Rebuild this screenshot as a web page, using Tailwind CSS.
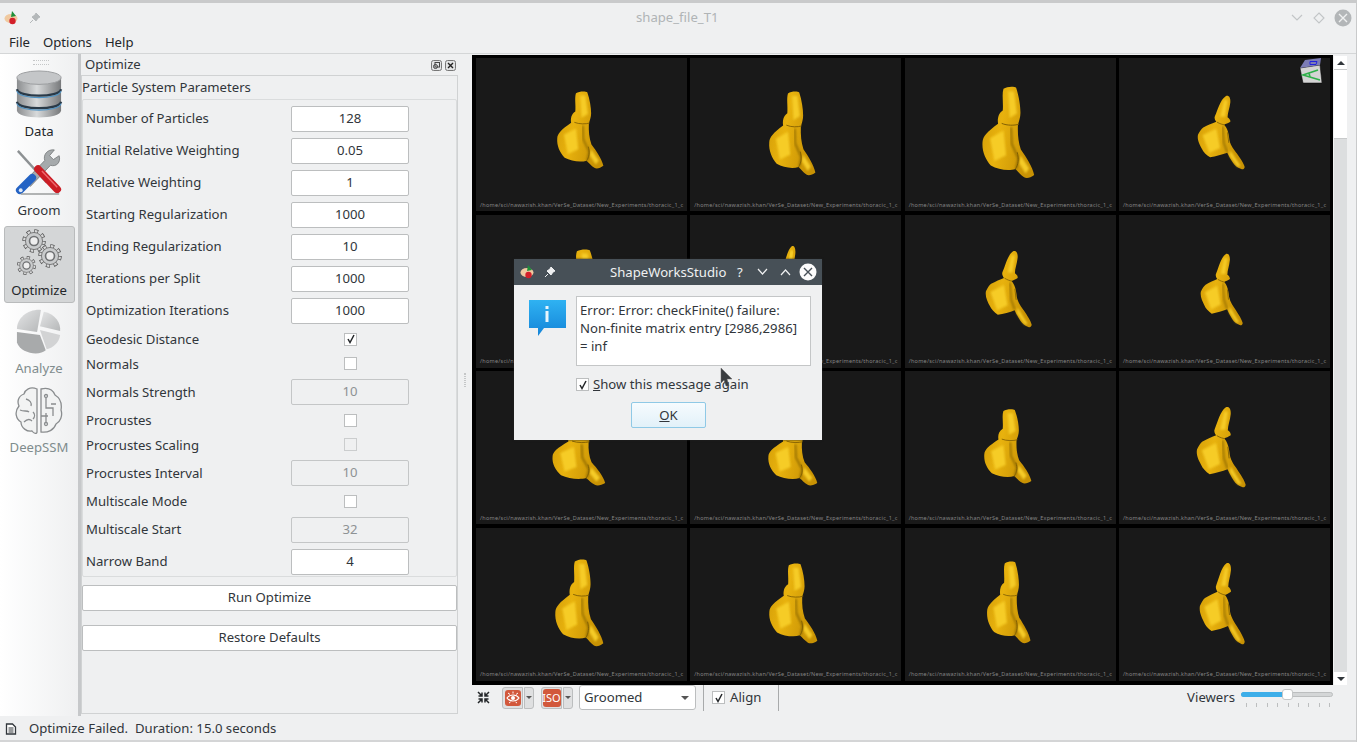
<!DOCTYPE html>
<html lang="en">
  <head>
    <meta charset="UTF-8" />
    <title>shape_file_T1</title>
    <script src="https://cdn.jsdelivr.net/npm/@tailwindcss/browser@4"></script>
  </head>
  <body class="bg-[#eff0f1] font-['Noto_Sans',sans-serif] text-[13.15px] leading-none text-[#232629] overflow-hidden">
    <!-- shared gradients and shapes -->
    <svg class="absolute w-0 h-0">
      <defs>
        <linearGradient id="gold" x1="0" y1="0" x2="1" y2="0.35">
          <stop offset="0" stop-color="#d09a06" />
          <stop offset="0.45" stop-color="#e8b20e" />
          <stop offset="1" stop-color="#c89204" />
        </linearGradient>
        <linearGradient id="metal" x1="0" y1="0" x2="1" y2="0">
          <stop offset="0" stop-color="#8b8d8f" />
          <stop offset="0.45" stop-color="#d8dadb" />
          <stop offset="1" stop-color="#77797b" />
        </linearGradient>
        <linearGradient id="pie" x1="0" y1="0" x2="1" y2="1">
          <stop offset="0" stop-color="#e4e5e6" />
          <stop offset="1" stop-color="#b5b7b8" />
        </linearGradient>
        <filter id="soft"><feGaussianBlur stdDeviation="3" /></filter>
        <symbol id="vertA" viewBox="100 85 155 250" preserveAspectRatio="none">
          <path fill="url(#gold)" d="M165 95 C175 88 195 88 200 92 C208 115 212 140 212 158 C212 170 208 180 205 190 C204 215 206 235 213 255 C228 275 245 300 250 322 C240 330 228 332 222 328 C212 322 205 312 198 306 C180 312 150 308 130 297 C115 280 105 260 107 235 C108 220 120 208 150 187 C148 175 150 160 163 152 C165 130 160 110 165 95 Z" />
          <path filter="url(#soft)" fill="#f6cc28" d="M178 102 L194 102 L202 160 L182 172 Z M128 225 L165 205 L172 270 L140 285 Z M212 270 L236 305 L226 318 L208 290 Z" />
          <path filter="url(#soft)" fill="none" stroke="#8f6a02" stroke-width="5" d="M186 196 L188 240 L206 278 L200 306" />
          <path fill="none" stroke="#7a5a02" stroke-width="2.5" d="M160 186 C175 192 195 192 208 188 M203 262 C208 280 206 295 198 306" />
        </symbol>
        <symbol id="vertB" viewBox="708 46 154 249" preserveAspectRatio="none">
          <path fill="url(#gold)" d="M800 50 C808 46 816 52 815 70 C813 90 806 105 806 120 C812 124 816 130 815 135 C808 140 800 142 795 145 C804 155 810 170 812 195 C816 215 828 228 836 240 C846 255 858 272 861 285 C860 292 855 294 850 292 C840 288 830 282 824 272 C816 260 810 248 805 238 C790 244 768 250 750 253 C738 245 728 235 724 225 C716 210 708 195 711 178 C716 168 722 158 728 154 C742 146 758 140 770 135 C766 130 762 122 766 115 C774 98 782 62 800 50 Z" />
          <path filter="url(#soft)" fill="#f6cc28" d="M795 62 L806 64 L798 118 L782 118 Z M726 180 L770 158 L782 222 L748 238 Z M815 230 L848 282 L838 284 L812 246 Z" />
          <path filter="url(#soft)" fill="none" stroke="#8f6a02" stroke-width="5" d="M790 150 L794 205 L805 236" />
          <path fill="none" stroke="#7a5a02" stroke-width="2.5" d="M772 136 C782 142 790 144 796 145 M806 170 L810 205" />
        </symbol>
        <symbol id="gear" viewBox="0 0 32 32">
          <circle cx="16" cy="16" r="11.5" fill="none" stroke="#555" stroke-width="6" stroke-dasharray="4.5 4.53" />
          <circle cx="16" cy="16" r="11.5" fill="none" stroke="#d8d9da" stroke-width="4" stroke-dasharray="3 6.03" stroke-dashoffset="-0.75" />
          <circle cx="16" cy="16" r="10.5" fill="#c9cbcc" stroke="#666" stroke-width="1" />
          <circle cx="16" cy="16" r="5.5" fill="#eeeeee" stroke="#707274" stroke-width="2" />
        </symbol>
      </defs>
    </svg>

    <div class="w-[1358px] h-[742px] flex flex-col relative">
      <!-- window title bar -->
      <div class="h-[3px] bg-[#c9cacb]"></div>
      <div class="h-[29px] flex items-center relative pr-[3px]">
        <svg class="ml-[3px] w-[18px] h-[16px]" viewBox="0 0 18 16">
          <ellipse cx="8" cy="8.5" rx="6.5" ry="4.5" fill="#f0c9a0" />
          <path d="M9 1 L13 6 L8 7 Z" fill="#1f8f3a" />
          <circle cx="9.5" cy="11" r="3.2" fill="#d3202a" />
        </svg>
        <svg class="ml-[8px] w-[12px] h-[12px]" viewBox="0 0 12 12">
          <path d="M7 1 L11 5 L9 6 L7 9 L3 5 L6 3 Z M4 8 L1 11" fill="#b4b8ba" stroke="#b4b8ba" stroke-width="1" />
        </svg>
        <span class="absolute left-[636px] top-[8px] text-[#b0b4b6]">shape_file_T1</span>
        <div class="ml-auto flex items-center mr-[3px]">
          <svg class="w-[14px] h-[10px]" viewBox="0 0 14 10"><path d="M2 2 L7 7 L12 2" fill="none" stroke="#c2c5c7" stroke-width="1.2" /></svg>
          <svg class="ml-[9px] w-[12px] h-[12px]" viewBox="0 0 12 12"><path d="M6 1 L11 6 L6 11 L1 6 Z" fill="none" stroke="#c2c5c7" stroke-width="1.1" /></svg>
          <svg class="ml-[9px] w-[18px] h-[18px]" viewBox="0 0 18 18"><circle cx="9" cy="9" r="8.5" fill="#b3b6b8" /><path d="M5 5 L13 13 M13 5 L5 13" stroke="#eff0f1" stroke-width="1.4" /></svg>
        </div>
      </div>

      <!-- menu -->
      <div class="h-[22px] flex items-center gap-[13px] pl-[9px] border-b border-[#d4d6d7]">
        <span>File</span><span>Options</span><span>Help</span>
      </div>

      <!-- main area -->
      <div class="flex h-[662px]">
        <!-- left toolbar -->
        <div class="w-[81px] shrink-0 border-r-[3px] border-[#c6c8ca] bg-gradient-to-r from-white to-[#eff0f1] flex flex-col items-center relative">
          <div class="absolute top-[6px] left-[33px] w-[16px] h-[5px] border-y border-dotted border-[#c5c7c8]"></div>
          <svg class="mt-[16px] w-[48px] h-[48px]" viewBox="0 0 50 50">
            <path d="M2 8 V42 C2 52 48 52 48 42 V8 Z" fill="url(#metal)" />
            <ellipse cx="25" cy="8" rx="23" ry="7" fill="#c4c6c8" stroke="#9a9c9e" />
            <path d="M2 20 C4 29 46 29 48 20" fill="none" stroke="#2a3a48" stroke-width="2.4" />
            <path d="M2 22 C4 31 46 31 48 22" fill="none" stroke="#4f93c4" stroke-width="1.2" />
            <path d="M2 33 C4 42 46 42 48 33" fill="none" stroke="#2a3a48" stroke-width="2.4" />
            <path d="M2 35 C4 44 46 44 48 35" fill="none" stroke="#4f93c4" stroke-width="1.2" />
          </svg>
          <span class="mt-[7px] h-[14px]">Data</span>
          <svg class="mt-[9px] w-[48px] h-[48px]" viewBox="0 0 50 50">
            <path d="M3 3 L33 36" stroke="#8d9193" stroke-width="2.5" />
            <path d="M46 8 L40 12 L36 8 L41 2 C34 1 29 7 31 13 L10 35 L16 40 L37 18 C43 20 48 15 46 8 Z" fill="#a6aaac" stroke="#6f7375" stroke-width="0.8" />
            <path d="M18 31 L5 44" stroke="#2463c4" stroke-width="8" stroke-linecap="round" />
            <circle cx="6" cy="44" r="2" fill="#dfe8f5" />
            <path d="M24 22 L44 43" stroke="#cb1d25" stroke-width="8" stroke-linecap="round" />
            <path d="M28 24 L44 41" stroke="#ee6a6f" stroke-width="1.5" />
            <path d="M6 48 H46" stroke="#9a9c9d" stroke-width="1.5" />
          </svg>
          <span class="mt-[8px] h-[14px] text-[#31363b]">Groom</span>
          <div class="mt-[8px] w-[71px] h-[77px] bg-[#d4d6d7] border border-[#b9bbbc] rounded-[3px] flex flex-col items-center">
            <div class="relative w-[46px] h-[50px] mt-[1px]">
              <svg class="absolute left-[5px] top-0 w-[26px] h-[26px]"><use href="#gear" /></svg>
              <svg class="absolute left-[21px] top-[15px] w-[26px] h-[26px]"><use href="#gear" /></svg>
              <svg class="absolute left-0 top-[27px] w-[21px] h-[21px]"><use href="#gear" /></svg>
            </div>
            <span class="mt-[6px]">Optimize</span>
          </div>
          <svg class="mt-[5px] w-[48px] h-[48px]" viewBox="0 0 50 50">
            <path d="M2 25 V36 C6 48 26 50 32 44 L26 28 Z" fill="#a8aaab" />
            <path d="M23 25 L2 22 C2 10 14 1 27 2 Z" fill="url(#pie)" />
            <path d="M30 4 C42 6 48 16 47 24 L26 19 Z" fill="url(#pie)" />
            <path d="M26 23 L47 28 C46 36 40 41 33 43 Z" fill="#d2d3d4" />
          </svg>
          <span class="mt-[6px] h-[14px] text-[#7f8c8d]">Analyze</span>
          <svg class="mt-[10px] w-[48px] h-[50px]" viewBox="0 0 48 50" fill="none" stroke="#8a8d8f" stroke-width="1.3">
            <path d="M22 3 C15 0 10 4 9 8 C3 10 2 16 4 20 C-1 26 1 33 6 36 C6 42 12 46 17 45 C19 48 22 48 22 46 Z" fill="#f2f3f3" />
            <path d="M26 3 C34 1 38 4 40 9 C45 12 47 18 46 24 C48 30 45 36 41 38 C39 44 33 47 26 46 Z" fill="#f2f3f3" />
            <path d="M11 13 C15 14 17 17 16 20 M5 24 C9 26 12 24 14 26 M9 36 C12 33 15 33 17 35 M18 26 C20 28 20 31 18 33" />
            <path d="M31 12 V22 H38 V30 M31 27 V36 M36 18 H41 M26 30 H33" />
            <circle cx="31" cy="10" r="1.5" /><circle cx="31" cy="38" r="1.5" />
          </svg>
          <span class="mt-[5px] text-[#7f8c8d]">DeepSSM</span>
        </div>

        <!-- optimize dock -->
        <div class="w-[377px] shrink-0 flex flex-col h-[660px]">
          <div class="h-[21px] flex items-center pl-[4px] pr-[1px] pt-px">
            <span class="text-[#31363b]">Optimize</span>
            <svg class="ml-auto w-[11px] h-[11px]" viewBox="0 0 11 11"><rect x="0.5" y="0.5" width="10" height="10" rx="2" fill="#e2e3e4" stroke="#777" /><rect x="4" y="2.5" width="4.5" height="4.5" fill="none" stroke="#444" /><circle cx="4.5" cy="6.5" r="2" fill="none" stroke="#444" /></svg>
            <svg class="ml-[3px] mr-[1px] w-[11px] h-[11px]" viewBox="0 0 11 11"><rect x="0.5" y="0.5" width="10" height="10" rx="2" fill="#e2e3e4" stroke="#777" /><path d="M3 3 L8 8 M8 3 L3 8" stroke="#222" stroke-width="1.4" /></svg>
          </div>
          <div class="flex-1 border border-[#d0d2d3] flex flex-col">
            <div class="h-[23px] flex items-center text-[#31363b]">Particle System Parameters</div>
            <div class="h-[478px] border border-[#dadcdd] rounded-[2px] pt-[6px] pl-[3px] flex flex-col gap-[6px] text-[#31363b]">
              <div class="flex items-center h-[26px]"><span class="w-[205px]">Number of Particles</span><div class="w-[118px] h-[26px] bg-white border border-[#bcbebf] rounded-[2px] flex items-center justify-center">128</div></div>
              <div class="flex items-center h-[26px]"><span class="w-[205px]">Initial Relative Weighting</span><div class="w-[118px] h-[26px] bg-white border border-[#bcbebf] rounded-[2px] flex items-center justify-center">0.05</div></div>
              <div class="flex items-center h-[26px]"><span class="w-[205px]">Relative Weighting</span><div class="w-[118px] h-[26px] bg-white border border-[#bcbebf] rounded-[2px] flex items-center justify-center">1</div></div>
              <div class="flex items-center h-[26px]"><span class="w-[205px]">Starting Regularization</span><div class="w-[118px] h-[26px] bg-white border border-[#bcbebf] rounded-[2px] flex items-center justify-center">1000</div></div>
              <div class="flex items-center h-[26px]"><span class="w-[205px]">Ending Regularization</span><div class="w-[118px] h-[26px] bg-white border border-[#bcbebf] rounded-[2px] flex items-center justify-center">10</div></div>
              <div class="flex items-center h-[26px]"><span class="w-[205px]">Iterations per Split</span><div class="w-[118px] h-[26px] bg-white border border-[#bcbebf] rounded-[2px] flex items-center justify-center">1000</div></div>
              <div class="flex items-center h-[26px]"><span class="w-[205px]">Optimization Iterations</span><div class="w-[118px] h-[26px] bg-white border border-[#bcbebf] rounded-[2px] flex items-center justify-center">1000</div></div>
              <div class="flex items-center h-[18px]"><span class="w-[258px] pt-[2px]">Geodesic Distance</span><div class="w-[13px] h-[13px] bg-white border border-[#bcbebf] flex items-center justify-center"><svg class="w-[10px] h-[10px]" viewBox="0 0 10 10"><path d="M2 5 L4 8.5 L8 1" fill="none" stroke="#232629" stroke-width="1.5" /></svg></div></div>
              <div class="flex items-center h-[18px]"><span class="w-[258px] pt-[3px]">Normals</span><div class="w-[13px] h-[13px] bg-white border border-[#bcbebf]"></div></div>
              <div class="flex items-center h-[26px] mt-px"><span class="w-[205px] pt-[2px]">Normals Strength</span><div class="w-[118px] h-[26px] bg-[#eff0f1] border border-[#c4c6c7] rounded-[2px] flex items-center justify-center text-[#8e9294]">10</div></div>
              <div class="flex items-center h-[18px]"><span class="w-[258px] pt-[2px]">Procrustes</span><div class="w-[13px] h-[13px] bg-white border border-[#bcbebf]"></div></div>
              <div class="flex items-center h-[18px]"><span class="w-[258px] pt-[3px]">Procrustes Scaling</span><div class="w-[13px] h-[13px] bg-[#eff0f1] border border-[#cbcdce]"></div></div>
              <div class="flex items-center h-[26px] mt-px"><span class="w-[205px] pt-[2px]">Procrustes Interval</span><div class="w-[118px] h-[26px] bg-[#eff0f1] border border-[#c4c6c7] rounded-[2px] flex items-center justify-center text-[#8e9294]">10</div></div>
              <div class="flex items-center h-[18px]"><span class="w-[258px] pt-[2px]">Multiscale Mode</span><div class="w-[13px] h-[13px] bg-white border border-[#bcbebf]"></div></div>
              <div class="flex items-center h-[26px] mt-px"><span class="w-[205px]">Multiscale Start</span><div class="w-[118px] h-[26px] bg-[#eff0f1] border border-[#c4c6c7] rounded-[2px] flex items-center justify-center text-[#8e9294]">32</div></div>
              <div class="flex items-center h-[26px]"><span class="w-[205px]">Narrow Band</span><div class="w-[118px] h-[26px] bg-white border border-[#bcbebf] rounded-[2px] flex items-center justify-center">4</div></div>
            </div>
            <div class="mt-[8px] h-[26px] bg-white border border-[#bcbebf] rounded-[2px] flex items-center justify-center text-[#31363b]">Run Optimize</div>
            <div class="mt-[14px] h-[26px] bg-white border border-[#bcbebf] rounded-[2px] flex items-center justify-center text-[#31363b]">Restore Defaults</div>
          </div>
        </div>

        <!-- handle between dock and viewers -->
        <div class="w-[14px] shrink-0 flex items-center justify-center">
          <div class="h-[14px] w-[2px] border-x border-dotted border-[#c5c7c8] mb-[10px]"></div>
        </div>

        <!-- viewers -->
        <div class="w-[876px] shrink-0 flex flex-col pt-px">
          <div class="flex h-[630px]">
            <div id="viewers" class="relative w-[861px] h-[630px] bg-black grid grid-cols-[211px_211px_211px_211px] grid-rows-[153px_153px_153px_153px] gap-x-[3.33px] gap-y-[3.67px] pl-[4px] pt-[3px]"></div>
            <div class="w-[15px] flex flex-col items-center">
              <div class="w-[13px] h-[13px] mt-px flex items-center justify-center bg-white"><div class="border-x-[4px] border-b-[4px] border-x-transparent border-b-[#31363b]"></div></div>
              <div class="w-[13px] h-[70px] bg-white border-y border-[#c8cacb]"></div>
              <div class="w-[13px] flex-1 bg-[#dcdedf]"></div>
              <div class="w-[13px] h-[13px] flex items-center justify-center bg-white"><div class="border-x-[4px] border-t-[4px] border-x-transparent border-t-[#31363b]"></div></div>
            </div>
          </div>
          <!-- viewer toolbar -->
          <div class="h-[25px] flex items-center relative">
            <svg class="ml-[5px] w-[13px] h-[13px]" viewBox="0 0 13 13"><path d="M1 1 L5 5 M5 1.5 V5 H1.5 M12 1 L8 5 M8 1.5 V5 H11.5 M1 12 L5 8 M5 11.5 V8 H1.5 M12 12 L8 8 M8 11.5 V8 H11.5" fill="none" stroke="#232629" stroke-width="1.5" /></svg>
            <div class="ml-[12px] w-[21px] h-[22px] bg-[#dfe0e1] border border-[#bcbebf] rounded-l-[3px] flex items-center justify-center">
              <svg class="w-[18px] h-[18px]" viewBox="0 0 18 18"><rect x="1" y="1" width="16" height="16" rx="3" fill="#d2583c" /><path d="M3 9 C6 5 12 5 15 9 C12 13 6 13 3 9 Z" fill="none" stroke="#fff" stroke-width="1.2" /><circle cx="9" cy="9" r="2" fill="#fff" /><path d="M4 4 L6 5.5 M9 2.5 V4.5 M14 4 L12 5.5 M5 14 L6.5 13 M13 14 L11.5 13" stroke="#fff" stroke-width="1" /></svg>
            </div>
            <div class="w-[10px] h-[22px] ml-px bg-[#dfe0e1] border border-[#bcbebf] rounded-r-[3px] flex items-center justify-center"><div class="border-x-[3px] border-t-[3px] border-x-transparent border-t-[#555]"></div></div>
            <div class="ml-[7px] w-[21px] h-[22px] bg-[#dfe0e1] border border-[#bcbebf] rounded-l-[3px] flex items-center justify-center">
              <div class="w-[18px] h-[18px] bg-[#d2583c] rounded-[3px] flex items-center justify-center text-white text-[11px]">ISO</div>
            </div>
            <div class="w-[10px] h-[22px] ml-px bg-[#dfe0e1] border border-[#bcbebf] rounded-r-[3px] flex items-center justify-center"><div class="border-x-[3px] border-t-[3px] border-x-transparent border-t-[#555]"></div></div>
            <div class="ml-[6px] w-[117px] h-[25px] bg-white border border-[#bcbebf] rounded-[3px] flex items-center pl-[4px] pr-[6px] text-[#31363b]">Groomed<div class="ml-auto border-x-[4px] border-t-[4px] border-x-transparent border-t-[#555]"></div></div>
            <div class="ml-[7px] w-px h-[26px] bg-[#a8aaab]"></div>
            <div class="ml-[8px] w-[13px] h-[13px] bg-white border border-[#bcbebf] flex items-center justify-center"><svg class="w-[10px] h-[10px]" viewBox="0 0 10 10"><path d="M2 5 L4 8.5 L8 1" fill="none" stroke="#232629" stroke-width="1.5" /></svg></div>
            <span class="ml-[5px] text-[#31363b]">Align</span>
            <div class="ml-[17px] w-px h-[26px] bg-[#a8aaab]"></div>
            <span class="ml-auto text-[#31363b] mr-[6px]">Viewers</span>
            <div class="w-[92px] h-[18px] mr-[15px] relative">
              <div class="absolute top-[3px] left-0 w-[92px] h-[5px] bg-[#d4d6d7] border border-[#bcbebf] rounded-full"></div>
              <div class="absolute top-[3px] left-0 w-[44px] h-[5px] bg-[#3daee9] rounded-full"></div>
              <div class="absolute top-0 left-[41px] w-[11px] h-[11px] bg-white border border-[#c4c6c7] rounded-[3px]"></div>
              <div class="absolute top-[14px] left-[5px] w-[84px] flex justify-between">
                <i class="block w-px h-[4px] bg-[#bcbebf]"></i><i class="block w-px h-[4px] bg-[#bcbebf]"></i><i class="block w-px h-[4px] bg-[#bcbebf]"></i><i class="block w-px h-[4px] bg-[#bcbebf]"></i><i class="block w-px h-[4px] bg-[#bcbebf]"></i><i class="block w-px h-[4px] bg-[#bcbebf]"></i><i class="block w-px h-[4px] bg-[#bcbebf]"></i><i class="block w-px h-[4px] bg-[#bcbebf]"></i><i class="block w-px h-[4px] bg-[#bcbebf]"></i>
              </div>
            </div>
          </div>
        </div>
      </div>

      <!-- status bar -->
      <div class="h-[24px] flex items-center pl-[5px] pt-px text-[#31363b]">
        <svg class="w-[12px] h-[12px]" viewBox="0 0 12 12"><path d="M1.5 1 H7.5 L10.5 4 V11 H1.5 Z" fill="#fff" stroke="#31363b" stroke-width="1.3" /><path d="M3.5 5 H8.5 M3.5 7 H8.5 M3.5 9 H8.5" stroke="#31363b" /></svg>
        <span class="ml-[12px] whitespace-pre">Optimize Failed.  Duration: 15.0 seconds</span>
      </div>
      <div class="flex-1 bg-[#d4d5d6]"></div>
      <div class="absolute top-0 right-0 w-[2px] h-[742px] bg-white border-l border-[#c9cacb]"></div>

      <!-- message dialog -->
      <div class="absolute left-[514px] top-[259px] w-[308px] h-[181px] bg-[#eff0f1] flex flex-col shadow-[0_0_2px_#222]">
        <div class="h-[26px] bg-[#475057] flex items-center relative text-[#eff0f1]">
          <svg class="ml-[5px] w-[18px] h-[16px]" viewBox="0 0 18 16">
            <ellipse cx="8" cy="8.5" rx="6.5" ry="4.5" fill="#f0c9a0" />
            <path d="M9 1 L13 6 L8 7 Z" fill="#1f8f3a" />
            <circle cx="9.5" cy="11" r="3.2" fill="#d3202a" />
          </svg>
          <svg class="ml-[7px] w-[12px] h-[12px]" viewBox="0 0 12 12"><path d="M7 1 L11 5 L9 6 L7 9 L3 5 L6 3 Z M4 8 L1 11" fill="#eff0f1" stroke="#eff0f1" stroke-width="1" /></svg>
          <span class="absolute left-[96px] top-[7px]">ShapeWorksStudio</span>
          <span class="absolute left-[223px] top-[7px]">?</span>
          <svg class="absolute left-[242px] top-[8px] w-[13px] h-[10px]" viewBox="0 0 13 10"><path d="M2 2 L6.5 7 L11 2" fill="none" stroke="#eff0f1" stroke-width="1.2" /></svg>
          <svg class="absolute left-[265px] top-[8px] w-[13px] h-[10px]" viewBox="0 0 13 10"><path d="M2 8 L6.5 3 L11 8" fill="none" stroke="#eff0f1" stroke-width="1.2" /></svg>
          <svg class="absolute left-[285px] top-[4px] w-[18px] h-[18px]" viewBox="0 0 18 18"><circle cx="9" cy="9" r="8.5" fill="#fcfcfc" /><path d="M5 5 L13 13 M13 5 L5 13" stroke="#475057" stroke-width="1.4" /></svg>
        </div>
        <div class="flex pl-[15px] pt-[11px]">
          <svg class="mt-[4px] w-[37px] h-[37px] shrink-0" viewBox="0 0 37 37">
            <defs><linearGradient id="info" x1="0" y1="0" x2="0" y2="1"><stop offset="0" stop-color="#2fb2f2" /><stop offset="1" stop-color="#1484d8" /></linearGradient></defs>
            <path d="M0 0 H37 V28 H15 L9 36 V28 H0 Z" fill="url(#info)" />
            <rect x="16.5" y="6" width="3" height="3" fill="#e8f5fd" />
            <rect x="16.5" y="11" width="3" height="11" fill="#e8f5fd" />
          </svg>
          <div class="ml-[10px] flex flex-col">
            <div class="w-[235px] h-[70px] bg-white border border-[#c4c6c7] pl-[3px] pt-[6px] flex flex-col gap-[4px] leading-[14px] text-[#31363b]">
              <span>Error: Error: checkFinite() failure:</span>
              <span>Non-finite matrix entry [2986,2986]</span>
              <span>= inf</span>
            </div>
            <div class="flex items-center mt-[12px] text-[#31363b]">
              <div class="w-[13px] h-[13px] bg-white border border-[#bcbebf] flex items-center justify-center"><svg class="w-[10px] h-[10px]" viewBox="0 0 10 10"><path d="M2 5 L4 8.5 L8 1" fill="none" stroke="#232629" stroke-width="1.5" /></svg></div>
              <span class="ml-[4px]"><u>S</u>how this message again</span>
            </div>
          </div>
        </div>
        <div class="ml-[117px] mt-[11px] w-[75px] h-[26px] bg-gradient-to-b from-[#f6fbfe] to-[#e2f1f9] border border-[#8fc9e6] rounded-[2px] flex items-center justify-center text-[#31363b]"><span><u>O</u>K</span></div>
      </div>
      <!-- mouse pointer -->
      <svg class="absolute left-[720px] top-[367px] w-[13px] h-[20px]" viewBox="0 0 13 20"><path d="M1 1 L12 12 L7 12 L9 19 L6 19 L4 13 L1 16 Z" fill="#3a3d40" stroke="#666" stroke-width="0.5" /></svg>
    </div>

    <script>
      // x, y, w, h are where the bone sits on screen
      const shapes = [
        ["vertA", 555, 90, 50, 80], ["vertA", 768, 90, 50, 87], ["vertA", 980, 85, 56, 95], ["vertB", 1197, 95, 48, 75],
        ["vertA", 553, 248, 57, 82], ["vertB", 770, 245, 38, 80], ["vertB", 985, 250, 47, 78], ["vertB", 1200, 253, 43, 73],
        ["vertA", 550, 410, 57, 77], ["vertA", 767, 410, 53, 77], ["vertA", 982, 408, 51, 77], ["vertB", 1196, 406, 50, 82],
        ["vertA", 553, 558, 52, 90], ["vertA", 768, 562, 52, 83], ["vertA", 985, 560, 47, 85], ["vertB", 1199, 562, 46, 83],
      ];
      const cellX = [476, 691, 905, 1119];
      const cellY = [58, 215, 371, 528];
      const viewers = document.getElementById("viewers");

      shapes.forEach((s, i) => {
        const left = s[1] - cellX[i % 4];
        const top = s[2] - cellY[Math.floor(i / 4)];
        const cell = document.createElement("div");
        cell.className = "relative bg-[#191919] overflow-hidden";
        cell.innerHTML =
          `<svg class="absolute" style="left:${left}px;top:${top}px;width:${s[3]}px;height:${s[4]}px"><use href="#${s[0]}" width="100%" height="100%" /></svg>` +
          `<div class="absolute left-[4px] bottom-[3px] text-[5.5px] tracking-[0.25px] whitespace-nowrap text-[#858585]">/home/sci/nawazish.khan/VerSe_Dataset/New_Experiments/thoracic_1_c</div>`;
        viewers.appendChild(cell);
      });

      // orientation cube in the corner of the top right viewer
      const cube = document.createElement("div");
      cube.className = "absolute left-[826px] top-[3px]";
      cube.innerHTML = `<svg class="w-[24px] h-[27px]" viewBox="0 0 24 27"><path d="M2 10 L22 7 L24 25 L5 25 Z" fill="#d4d4d4" stroke="#000" stroke-width="0.5" /><path d="M7 2 L23 0 L22 7 L2 10 Z" fill="#7c7cb5" /><path d="M12 3.5 H19 L18 6.5 H12 Z" fill="none" stroke="#2222dd" /><path d="M20 12 L5 17 L22 22 M11 15 L12 19" fill="none" stroke="#2fb04a" stroke-width="1.6" /></svg>`;
      viewers.appendChild(cube);
    </script>
  </body>
</html>
